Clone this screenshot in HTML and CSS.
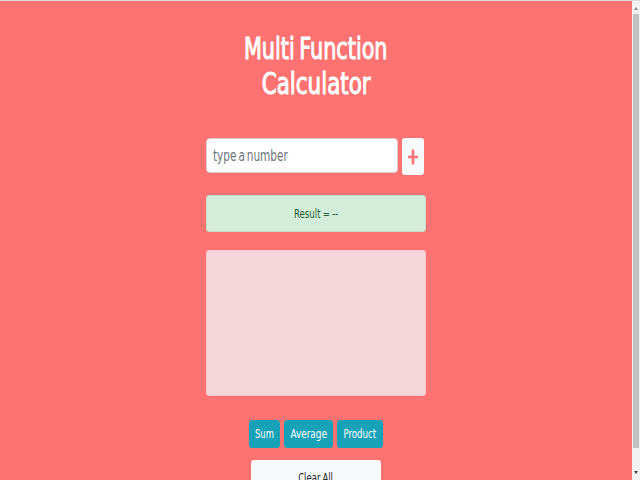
FILE: index.html
```html
<!DOCTYPE html>
<html lang="en">
<head>
<meta charset="utf-8">
<title>Multi Function Calculator</title>
<link rel="stylesheet" href="styles.css">
</head>
<body>
<div class="window">
  <main class="page">
    <h1 class="title"><span class="t1">Multi Function</span><span class="t2">Calculator</span></h1>
    <div class="entry">
      <div class="field"><span>type a number</span></div>
      <button class="add" aria-label="Add"><svg width="12" height="16" viewBox="0 0 12 16"><path d="M6 0.5V15.5M1 8H11" stroke="#ff7474" stroke-width="2.6" fill="none"/></svg></button>
    </div>
    <div class="result"><span>Result = --</span></div>
    <div class="list"></div>
    <div class="actions">
      <button class="btn sum"><span>Sum</span></button>
      <button class="btn average"><span>Average</span></button>
      <button class="btn product"><span>Product</span></button>
    </div>
    <button class="clear"><span>Clear All</span></button>
  </main>
  <div class="scrollbar">
    <svg class="arrow" width="6" height="12" viewBox="0 0 6 12"><path d="M1 9L3 6L5 9Z" fill="#909090"/></svg>
    <div class="thumb"></div>
    <svg class="arrow" width="6" height="12" viewBox="0 0 6 12"><path d="M1 4L3 7L5 4Z" fill="#404040"/></svg>
  </div>
</div>
</body>
</html>
```
FILE: styles.css
```css
* { box-sizing: border-box; }
body { margin: 0; overflow: hidden; font-family: "DejaVu Sans", sans-serif; }
button { font: inherit; border: 0; padding: 0; }
span { display: block; flex: none; white-space: nowrap; }
.window { display: flex; height: 480px; border-top: 1px solid #dcdcdc; overflow: hidden; }
.page { width: 632px; flex: none; background: #ff7272; padding: 30px 0 0 206px; }
.title { width: 220px; height: 107px; margin: 0; display: flex; flex-direction: column; align-items: center; color: #fff; font-size: 30px; font-weight: 400; line-height: 35px; -webkit-text-stroke: 1.1px #fff; }
.t1 { word-spacing: -3px; transform: scaleX(.692); }
.t2 { transform: scaleX(.715); }
.entry { display: flex; gap: 4px; height: 37px; }
.field { width: 192px; height: 35px; padding: 0 6px; background: #fff; border: 1px solid #d8cccf; border-radius: 4px; display: flex; align-items: center; color: #6c757d; font-size: 15px; }
.field span { word-spacing: -2px; transform: scaleX(.7); transform-origin: left; }
.add { width: 22px; height: 37px; background: #f8f9fa; border-radius: 3px; display: flex; align-items: center; justify-content: center; }
.result { width: 220px; height: 37px; margin-top: 20px; background: #d4edda; border: 1px solid #c3dccb; border-radius: 3px; display: flex; align-items: center; justify-content: center; color: #285c36; font-size: 12.5px; }
.result span { word-spacing: -1px; transform: scaleX(.69); }
.list { width: 220px; height: 146px; margin-top: 18px; background: #f5d7da; border: 1px solid #f2c8cd; border-radius: 3px; }
.actions { width: 220px; margin-top: 24px; display: flex; justify-content: center; gap: 4px; }
.btn { height: 28px; background: #17a2b8; border-radius: 3px; color: #fff; font-size: 12px; display: flex; align-items: center; justify-content: center; }
.sum { width: 31px; }
.average { width: 49px; }
.product { width: 46px; }
.sum span { transform: scaleX(.7); }
.average span { transform: scaleX(.74); }
.product span { transform: scaleX(.72); }
.clear { width: 130px; height: 37px; margin: 12px 0 0 45px; background: #f8f9fa; border-radius: 3px; color: #212529; font-size: 12.5px; display: flex; align-items: center; justify-content: center; padding-bottom: 2px; }
.clear span { word-spacing: -1px; transform: scaleX(.68); }
.scrollbar { width: 8px; padding: 0 1px; background: #f1f1f1; display: flex; flex-direction: column; }
.arrow { display: block; flex: none; }
.thumb { height: 434px; margin: 1px 0 19px; background: #c1c1c1; flex: none; }
```
